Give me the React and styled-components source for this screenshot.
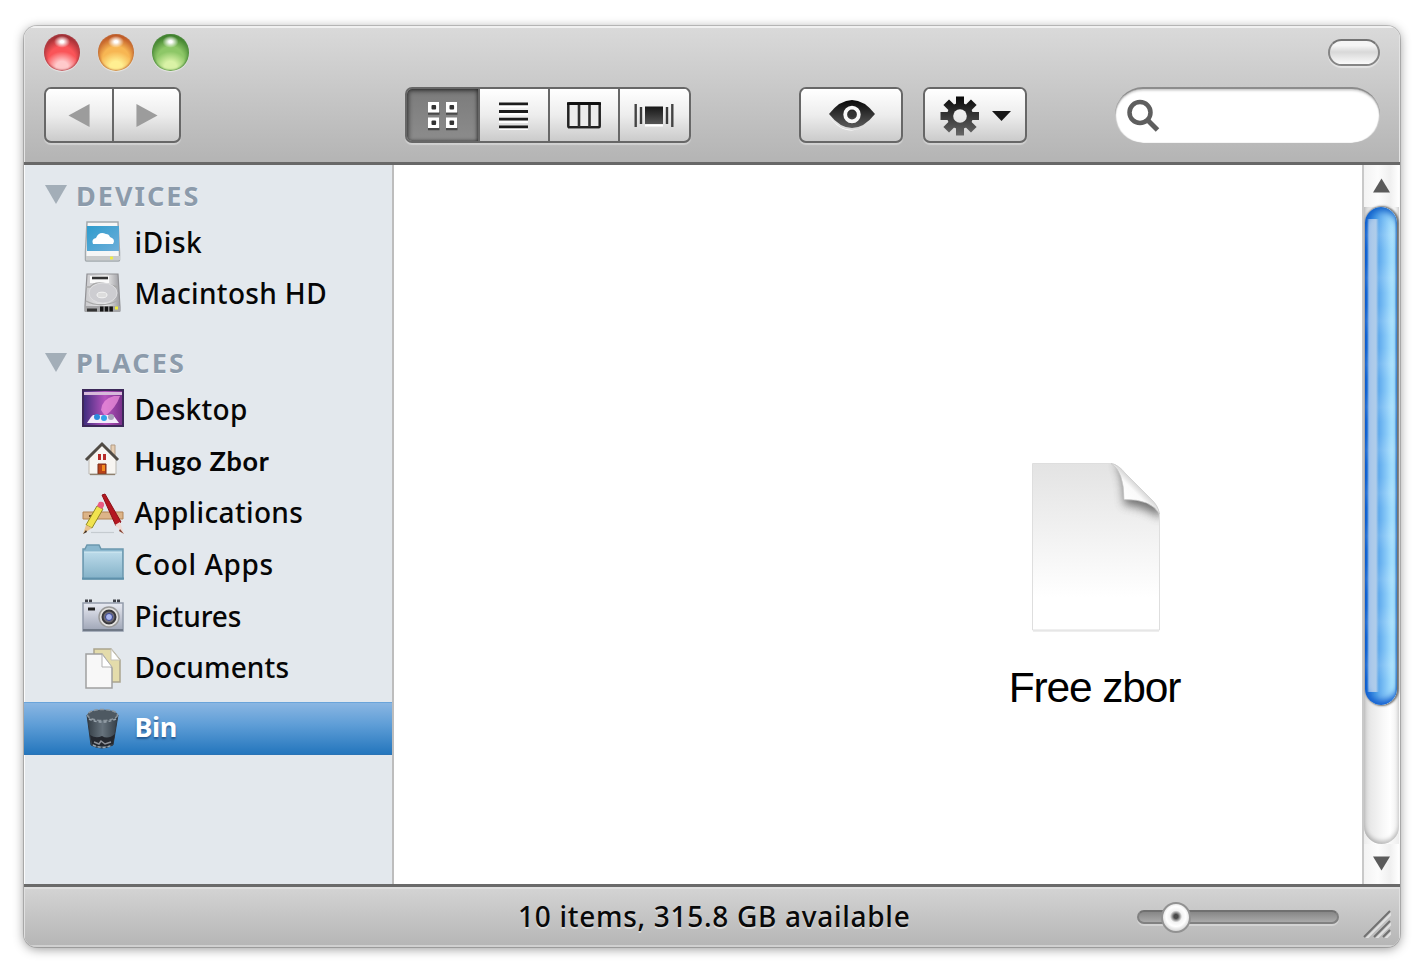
import React from 'react';
import styled, { createGlobalStyle, css } from 'styled-components';

const GlobalStyle = createGlobalStyle`
  * { box-sizing: border-box; }
  body { margin: 0; background: #fff; overflow: hidden; }
`;

const uiFont = css`font-family: "Noto Sans", "Open Sans", sans-serif;`;

const Page = styled.div`
  width: 1427px;
  height: 972px;
  padding: 26px 27px 25px 24px;
`;

const Window = styled.main`
  display: flex;
  flex-direction: column;
  height: 921px;
  border-radius: 13px;
  overflow: hidden;
  background: #fff;
  box-shadow: 0 0 0 1px rgba(0, 0, 0, 0.18), 0 2px 11px rgba(0, 0, 0, 0.42);
`;

const Header = styled.header`
  flex: none;
  height: 139px;
  padding: 8px 20px 0;
  background: linear-gradient(#dadada, #b4b4b4);
  border-bottom: 3px solid #686868;
  box-shadow: inset 0 2px 0 #f1f1f1, inset 1px 0 0 #e4e4e4, inset -1px 0 0 #e4e4e4;
`;

const TitleRow = styled.div`
  display: flex;
  align-items: center;
  justify-content: space-between;
  height: 37px;
`;

const Lights = styled.div`
  display: flex;
  gap: 18px;
`;

const Light = styled.span`
  width: 36.2px;
  height: 36.5px;
  border-radius: 50%;
  background:
    radial-gradient(ellipse 8px 6px at 50% 21%, #fff 0 20%, rgba(255, 255, 255, 0) 100%),
    radial-gradient(ellipse 17px 15px at 50% 88%, ${(p) => p.$glow} 0 35%, transparent 100%),
    radial-gradient(circle 27px at 50% 70%, ${(p) => p.$mid} 50%, ${(p) => p.$dark} 100%);
  box-shadow: inset 0 0 2px 1px ${(p) => p.$rim}, 0 1px 1px rgba(255, 255, 255, 0.5);
`;

const Pill = styled.span`
  width: 52px;
  height: 27px;
  border: 2.5px solid #858585;
  border-top-color: #747474;
  border-radius: 14px;
  background: linear-gradient(#f5f5f5 0 20%, #d8d8d8 48%, #fafafa);
  box-shadow: 0 2px 1px rgba(255, 255, 255, 0.45);
`;

const ToolRow = styled.div`
  display: flex;
  height: 56px;
  margin-top: 16px;
`;

const ButtonGroup = styled.div`
  display: flex;
  width: ${(p) => p.$width}px;
  height: 56px;
  margin-right: ${(p) => p.$after}px;
  overflow: hidden;
  border: 2px solid #676767;
  border-radius: 7px;
  background: linear-gradient(#fff, #ededed 50%, #cbcbcb);
  box-shadow: 0 2px 1px rgba(255, 255, 255, 0.35);
`;

const Tool = styled.button`
  display: flex;
  flex: ${(p) => (p.$width ? `0 0 ${p.$width}px` : '1')};
  align-items: center;
  justify-content: center;
  padding: 1px 0 0;
  border: 0;
  background: transparent;
  box-shadow: inset 0 1px 0 #fff;
  & + & { border-left: 2px solid #676767; }
  ${(p) => p.$active && css`
    background: linear-gradient(#7b7b7b, #8c8c8c);
    box-shadow: inset 0 2px 5px rgba(0, 0, 0, 0.45), inset 2px 0 4px rgba(0, 0, 0, 0.3), inset -1px 0 3px rgba(0, 0, 0, 0.3);
  `}
`;

const Search = styled.div`
  display: flex;
  align-items: center;
  width: 265px;
  height: 56px;
  padding-left: 11px;
  border-radius: 28px;
  border-top: 2px solid #8c8c8c;
  background: #fff;
  box-shadow: inset 0 2px 2px rgba(0, 0, 0, 0.15), inset 1px 0 1px rgba(0, 0, 0, 0.2), inset -1px 0 1px rgba(0, 0, 0, 0.2);
`;

const Body = styled.div`
  display: flex;
  flex: none;
  height: 719px;
`;

const Sidebar = styled.nav`
  ${uiFont}
  width: 370px;
  padding-top: 9px;
  border-right: 2px solid #bdbdbd;
  background: #e3e8ed;
  box-shadow: inset 1px 0 0 #fafbfc;
`;

const Heading = styled.h2`
  display: flex;
  align-items: center;
  gap: 9px;
  height: 42.4px;
  margin: ${(p) => p.$top || 0}px 0 0;
  padding-left: 21px;
  color: #8c9bab;
  font-size: 27px;
  font-weight: 700;
  line-height: 1;
  text-shadow: 0 1px 0 #f4f6f8;
`;

const Section = styled.span`
  letter-spacing: ${(p) => p.$track}px;
`;

const Item = styled.div`
  display: flex;
  align-items: center;
  gap: 10.5px;
  height: 51.6px;
  padding-left: 58px;
  color: #060606;
  svg { flex: none; overflow: visible; }
  ${(p) => p.$selected && css`
    height: 53px;
    margin-top: 8px;
    color: #fff;
    background: linear-gradient(#8ab6e2, #5f9ed7 42%, #2476bd);
    border-top: 1px solid #6aa4da;
    border-bottom: 1px solid #2a73b5;
    text-shadow: 0 2px 2px rgba(0, 40, 90, 0.5);
  `}
`;

const Label = styled.span`
  padding-bottom: ${(p) => p.$lift || 1}px;
  font-size: ${(p) => p.$size || 28}px;
  font-weight: ${(p) => p.$weight || 500};
  letter-spacing: ${(p) => p.$track || 0}px;
  line-height: 1;
  white-space: nowrap;
  ${(p) => p.$face && css`font-family: ${p.$face}, sans-serif;`}
`;

const Content = styled.section`
  display: flex;
  flex: 1;
  justify-content: flex-end;
  padding: 298px 176px 0 0;
`;

const File = styled.figure`
  display: flex;
  flex-direction: column;
  align-items: center;
  width: 180px;
  height: 260px;
  margin: 0;
  svg { overflow: visible; }
`;

const FileName = styled.figcaption`
  margin: 33px 3px 0 0;
  color: #000;
  font: 42.5px/48px "Liberation Sans", Arial, sans-serif;
  letter-spacing: -1.15px;
  white-space: nowrap;
`;

const Scrollbar = styled.div`
  display: flex;
  flex-direction: column;
  width: 38px;
  border-left: 2px solid #c9c9c9;
  border-right: 1px solid #fafafa;
  background: linear-gradient(90deg, #ececec, #fff 35%, #fff 60%, #eee);
`;

const ScrollArrow = styled.div`
  display: flex;
  align-items: center;
  justify-content: center;
  height: ${(p) => p.$height}px;
  padding-right: 1px;
  background: linear-gradient(90deg, #f3f3f3, #fcfcfc 40%, #f0f0f0 75%, #fff);
`;

const Track = styled.div`
  height: 637px;
  border-radius: 0 0 18px 18px;
  background: linear-gradient(90deg, #d9d9d9, #e9e9e9 20%, #f8f8f8 55%, #fff 75%, #eee);
  box-shadow: inset 0 -3px 4px rgba(0, 0, 0, 0.25);
`;

const Thumb = styled.div`
  width: 32px;
  height: 498px;
  margin-left: 1px;
  border-radius: 17px;
  background:
    linear-gradient(90deg, transparent 2px, #a9c8ea 4px, #b0cdea 11px, transparent 14px) 0 12px / 100% 473px no-repeat,
    repeating-linear-gradient(rgba(255, 255, 255, 0) 0 12px, rgba(255, 255, 255, 0.12) 28px, rgba(255, 255, 255, 0) 43px),
    linear-gradient(90deg, #0758cf, #1d70d8 9%, #4a9de6 35%, #67b0ef 48%, #8dcdf9 70%, #b4ecff 92%, #5295ca);
  box-shadow: inset 0 6px 7px -2px #1260c8, inset 0 -7px 6px -2px #1662d0, 1px 0 2px 1px rgba(60, 60, 60, 0.7);
`;

const StatusBar = styled.footer`
  ${uiFont}
  display: grid;
  grid-template-columns: 494px 1fr 202px 61px;
  align-items: center;
  flex: none;
  height: 63px;
  border-top: 3px solid #6a6a6a;
  background: linear-gradient(#d4d4d4, #b5b5b5);
  box-shadow: inset 0 2px 0 #dedede, inset 0 -2px 0 #d0d0d0, inset -1px 0 0 #e0e0e0, inset 1px 0 0 #e0e0e0;
`;

const Status = styled.p`
  grid-column: 2;
  margin: 0;
  padding-bottom: 2px;
  color: #090909;
  font-size: 28px;
  font-weight: 500;
  line-height: 1;
  letter-spacing: 0.71px;
  white-space: nowrap;
  text-shadow: 0 2px 0 rgba(255, 255, 255, 0.45);
`;

const Slider = styled.div`
  display: flex;
  align-items: center;
  width: 202px;
  height: 14px;
  padding-left: 24px;
  border: 2px solid #818181;
  border-top-color: #707070;
  border-radius: 7px;
  background: linear-gradient(#878787, #aaa);
  box-shadow: 0 2px 0 rgba(255, 255, 255, 0.3);
`;

const Knob = styled.span`
  flex: none;
  width: 30px;
  height: 31px;
  margin-left: -2px;
  border: 2px solid #929292;
  border-radius: 50%;
  background: radial-gradient(circle at 50% 46%, #4a4a4a 0 2px, #9e9e9e 4px, #f2f2f2 6px, #fff 10px, #dcdcdc 14px);
`;

const Grip = styled.svg`
  justify-self: end;
  margin: 13px 9px 0 0;
`;

const Chevron = ({ left }) => (
  <svg width="22" height="23" viewBox="0 0 22 24">
    <path d={left ? 'M0 12 22 0V24Z' : 'M22 12 0 0V24Z'} fill="#9c9c9c" />
  </svg>
);

const Disclosure = () => (
  <svg width="22" height="20" viewBox="0 0 22 20"><path d="M0 0H22L11 19Z" fill="#a3aeb8" /></svg>
);

const GridIcon = () => (
  <svg width="30" height="30" viewBox="0 0 30 30">
    {[[0, 1], [18, 1], [0, 16.5], [18, 16.5]].map(([x, y]) => (
      <g key={`${x}-${y}`}>
        <path d={`M${x} ${y + 11.5}h11.5`} stroke="#484848" strokeWidth="2.5" />
        <rect x={x} y={y} width="11" height="10.5" fill="#fff" />
        <rect x={x + 3.5} y={y + 3} width="4.6" height="4.6" rx="1" fill="#333" />
      </g>
    ))}
  </svg>
);

const ListIcon = () => (
  <svg width="30" height="28" viewBox="0 0 30 28">
    <path d="M0 4.3h29M0 12h29M0 19.7h29M0 27.4h29" stroke="#fff" strokeWidth="2.5" />
    <path d="M0 1.8h29M0 9.5h29M0 17.2h29M0 24.9h29" stroke="#1c1c1c" strokeWidth="2.8" />
  </svg>
);

const ColumnsIcon = () => (
  <svg width="34" height="27" viewBox="0 0 34 27">
    <path d="M2 27.500h30" stroke="#fff" strokeWidth="2" />
    <rect x="1.3" y="1.3" width="31.4" height="24" rx="1" fill="#ececec" stroke="#222" strokeWidth="2.5" />
    <path d="M12 2v23M22.500 2v23" stroke="#303030" strokeWidth="2.6" />
    <path d="M0 1.700h34" stroke="#111" strokeWidth="2.8" />
  </svg>
);

const FlowIcon = () => (
  <svg width="40" height="26" viewBox="0 0 40 26">
    <defs><linearGradient id="cover" x2="0" y2="1"><stop stopColor="#161616" /><stop offset="1" stopColor="#555" /></linearGradient></defs>
    <path d="M1.700 1v23M38.300 1v23" stroke="#444" strokeWidth="2.4" />
    <path d="M7 4v17M33 4v17" stroke="#3b3b3b" strokeWidth="2.4" />
    <path d="M11 22.500h18" stroke="#fff" strokeWidth="2" />
    <rect x="11" y="3.5" width="18" height="17.5" fill="url(#cover)" />
  </svg>
);

const EyeIcon = () => (
  <svg width="48" height="32" viewBox="-1 0 48 32">
    <defs><linearGradient id="eye" x2="0" y2="1"><stop stopColor="#080808" /><stop offset="1" stopColor="#5d5d5d" /></linearGradient></defs>
    <path d="M1 16Q11 30 24 30T47 16Q37 30 24 30.500T1 16Z" fill="#fff" />
    <path d="M1 14Q12 0 24 0T47 14Q36 28 24 28T1 14Z" fill="url(#eye)" />
    <circle cx="24" cy="14.5" r="6.8" fill="none" stroke="#f8f8f8" strokeWidth="3.8" />
    <circle cx="24" cy="14" r="3" fill="#333" />
  </svg>
);

const GearIcon = () => (
  <svg width="40" height="40" viewBox="-1 0 40 40">
    <defs><linearGradient id="gear" gradientUnits="userSpaceOnUse" x1="0" y1="0" x2="0" y2="40"><stop stopColor="#070707" /><stop offset="1" stopColor="#686868" /></linearGradient></defs>
    <mask id="teeth">
      <circle cx="20" cy="20" r="13" fill="#fff" />
      {[0, 45, 90, 135].map((a) => <rect key={a} x="16" y="0.5" width="8" height="39" fill="#fff" transform={`rotate(${a} 20 20)`} />)}
      <circle cx="20" cy="20" r="6.8" fill="#000" />
    </mask>
    <rect width="40" height="40" fill="url(#gear)" mask="url(#teeth)" />
  </svg>
);

const IDiskIcon = () => (
  <svg width="42" height="42" viewBox="0 0 42 42">
    <defs><linearGradient id="sky" x2="1" y2="1"><stop stopColor="#2e9ccd" /><stop offset="1" stopColor="#6eaed9" /></linearGradient></defs>
    <path d="M5 1h31l1.500 30v8q0 1-1 1h-32q-1 0-1-1v-8Z" fill="#f6f6f6" stroke="#a3a9ad" strokeWidth="1.5" />
    <path d="M5 5h32v25H5Z" fill="url(#sky)" />
    <path d="M11 23q-2-5 3-6 3-7 10-4 3 0 4 3 6 2 3 7Z" fill="#fff" />
    <path d="M4 35h34v4H4Z" fill="#c9cbcc" /><path d="M28 37h3" stroke="#efed42" strokeWidth="2.8" />
  </svg>
);

const DriveIcon = () => (
  <svg width="42" height="42" viewBox="0 0 42 42">
    <defs><linearGradient id="metal" x2="1" y2="0"><stop stopColor="#c9c9cc" /><stop offset=".6" stopColor="#eee" /><stop offset="1" stopColor="#9b9ba0" /></linearGradient></defs>
    <path d="M5 1h31l2 33v4H3v-5Z" fill="url(#metal)" stroke="#909094" strokeWidth="1.2" />
    <path d="M8 3h19v7H8Z" fill="#fafafa" /><path d="M10 5h16" stroke="#333" strokeWidth="2.6" />
    <path d="M4 14h4q5-6 16-3l12 3M4 28q15 8 33-1" fill="none" stroke="#aaa" strokeWidth="1.3" />
    <ellipse cx="21" cy="20" rx="14" ry="10" fill="#cdcdd1" stroke="#dedee0" />
    <ellipse cx="20" cy="22" rx="5" ry="2.800" fill="#ddd" stroke="#f4f4f4" />
    <path d="M3 33h35v6H3Z" fill="#a5a5a7" /><path d="M5 37h10" stroke="#333" strokeWidth="3" /><path d="M18 36h14" stroke="#151515" strokeWidth="5" strokeDasharray="3.500 1.200" /><path d="M33 35h3" stroke="#efed42" strokeWidth="3" />
  </svg>
);

const DesktopIcon = () => (
  <svg width="42" height="42" viewBox="0 0 42 42">
    <defs><linearGradient id="aurora" x2="1"><stop stopColor="#3c2c7c" /><stop offset=".55" stopColor="#b552bd" /><stop offset="1" stopColor="#762f88" /></linearGradient></defs>
    <rect x="1" y="1" width="40" height="36" fill="url(#aurora)" stroke="#3c2859" strokeWidth="2" />
    <path d="M19 21Q20 10 32 7h6Q34 19 23 27Z" fill="#ee8fdb" opacity=".75" />
    <path d="M2 4.500h38" stroke="#d6bada" strokeWidth="3" />
    <path d="m9 28 2-2h20l6 8H5Z" fill="#f3ecfa" />
    <circle cx="15" cy="28" r="3" fill="#2c8bdc" /><circle cx="22" cy="29" r="3" fill="#33a2ea" /><circle cx="29" cy="28" r="3" fill="#aaa3bb" />
  </svg>
);

const HomeIcon = () => (
  <svg width="42" height="42" viewBox="0 0 42 42">
    <path d="M29 5h4v11h-4Z" fill="#e7ceb2" stroke="#b29b84" /><path d="M7 18 20 5 34 18V34H7Z" fill="#f7f5f1" stroke="#bbb7b0" />
    <path d="M4 20 20 4 36 20" fill="none" stroke="#504b45" strokeWidth="3" />
    <path d="M16 14h3v6h-3ZM21 14h3v6h-3Z" fill="#b72c28" />
    <path d="M16 24h8v10h-8Z" fill="#b84319" stroke="#7a2d18" /><path d="M20 25h3v6h-3Z" fill="#f38b20" />
    <path d="M8 34.500h25" stroke="#8f806e" strokeWidth="1.3" />
  </svg>
);

const AppsIcon = () => (
  <svg width="42" height="42" viewBox="0 0 42 42">
    <path d="M1 20h40v7H1Z" fill="#dcb488" stroke="#b28355" /><path d="M7 24h2M32 24h2" stroke="#604027" strokeWidth="2" />
    <path d="m20 3 3-1 16 28-5 4Z" fill="#b41720" stroke="#8c1018" /><path d="m33 33 5-3 4 12Z" fill="#eedbd6" /><path d="m38 37 4 5-5-3" fill="#86402f" />
    <path d="m15 14 6 3L10 36l-6-3Z" fill="#f1e34e" stroke="#908823" /><path d="m15 14 2-4q6-1 5 4l-2 3Z" fill="#ea5b82" />
    <path d="m4 33 6 3-9 6Z" fill="#e8c28e" /><path d="m4 38-3 4 4-2" fill="#392920" /><path d="M9 40.500h23" stroke="#c5cbd0" strokeWidth="1.2" />
  </svg>
);

const FolderIcon = () => (
  <svg width="42" height="42" viewBox="0 0 42 42">
    <defs><linearGradient id="folder" x2="0" y2="1"><stop stopColor="#bcdbea" /><stop offset="1" stopColor="#87b4ca" /></linearGradient></defs>
    <path d="M1 35V5h2l2-4h12l2 4h22v30Z" fill="#8ab7ce" stroke="#6c98ae" strokeWidth="1.5" />
    <path d="M2 8h38v25H2Z" fill="url(#folder)" /><path d="M2 8h38" stroke="#d6ebf4" /><path d="M0 34.500h42" stroke="#5f91ab" strokeWidth="2" />
  </svg>
);

const CameraIcon = () => (
  <svg width="42" height="42" viewBox="0 0 42 42">
    <defs><linearGradient id="camera" x2="0" y2="1"><stop stopColor="#e9ebf3" /><stop offset="1" stopColor="#9da4b5" /></linearGradient></defs>
    <path d="M3 6h8M31 6h8" stroke="#3e4048" strokeWidth="3" strokeDasharray="3 1" />
    <rect x="1" y="8" width="40" height="28" fill="url(#camera)" stroke="#929baa" strokeWidth="1.5" />
    <path d="M6 14h7" stroke="#222" strokeWidth="3" /><circle cx="27" cy="22" r="10" fill="#e2e1df" stroke="#999" strokeWidth="1.500" />
    <circle cx="27" cy="22" r="6.5" fill="#6f6d75" stroke="#39383c" strokeWidth="2" /><circle cx="27" cy="22" r="3.500" fill="#a9b5ed" stroke="#394593" />
    <path d="M1 35h40" stroke="#707987" strokeWidth="2" />
  </svg>
);

const DocumentsIcon = () => (
  <svg width="42" height="42" viewBox="0 0 42 42">
    <path d="M12 2h17l9 11v22H12Z" fill="#e4dcab" stroke="#aaa48e" strokeWidth="1.5" /><path d="M29 2v11h9Z" fill="#fff" stroke="#c6c3b8" />
    <path d="M4 7h16l10 14v20H4Z" fill="#f8f8f8" stroke="#a0a0a0" strokeWidth="1.5" /><path d="M20 7v13h10Z" fill="#fff" stroke="#b1b1b1" />
  </svg>
);

const BinIcon = () => (
  <svg width="42" height="42" viewBox="0 0 42 42">
    <defs><linearGradient id="bin"><stop stopColor="#343d45" /><stop offset=".5" stopColor="#66727c" /><stop offset="1" stopColor="#333d46" /></linearGradient></defs>
    <path d="M5 8 9 38q11 6 22 0l5-30Z" fill="url(#bin)" stroke="#303841" />
    <path d="M8 28q6 4 12 1 6 4 13-2l-2 10q-11 5-21 0Z" fill="#24272e" />
    <path d="m12 35 5 2 2-3 4 3 6-2" fill="none" stroke="#8f9299" strokeWidth="1.500" />
    <ellipse cx="20.5" cy="8" rx="15" ry="5.500" fill="#4e5962" stroke="#8b959d" strokeWidth="1.500" strokeDasharray="4 2" />
    <path d="M7 12q13 6 27 0M11 38q10 5 19 0" fill="none" stroke="#9aa5ae" strokeWidth="1.500" strokeDasharray="3 2" />
  </svg>
);

const FileIcon = () => (
  <svg width="128" height="168" viewBox="0 0 128 168">
    <defs>
      <linearGradient id="paper" x2="0" y2="1"><stop stopColor="#e3e3e3" /><stop offset=".35" stopColor="#efefef" /><stop offset=".8" stopColor="#fff" /></linearGradient>
      <linearGradient id="fold" gradientUnits="userSpaceOnUse" x1="90" y1="36" x2="108" y2="18"><stop stopColor="#fff" /><stop offset=".55" stopColor="#fafafa" /><stop offset="1" stopColor="#bcbcbc" /></linearGradient>
      <clipPath id="sheet"><path d="M.5.5H78C86 .5 88 7 94 12L119 37Q127 44 127.500 52V167H.5Z" /></clipPath>
      <filter id="soft" x="-50%" y="-50%" width="200%" height="200%"><feGaussianBlur stdDeviation="5" /></filter>
    </defs>
    <path d="M1 168h126" stroke="#dedede" strokeWidth="1" />
    <g clipPath="url(#sheet)">
      <path d="M0 0h128v168H0Z" fill="url(#paper)" />
      <path d="M84 0Q92 13 92 42Q107 42 130 55V36L94 0Z" fill="#555" opacity=".8" filter="url(#soft)" />
    </g>
    <path d="M.5.5H78C86 .5 88 7 94 12L119 37Q127 44 127.500 52V167H.5Z" fill="none" stroke="#dedede" />
    <path d="M79 .5Q92 8 92 36.500Q119 36 127.500 51Q126 42 119 36L93 10Q87 2 79 .5Z" fill="url(#fold)" stroke="#c9c9c9" strokeWidth=".7" />
  </svg>
);

const places = [
  { name: 'Desktop', icon: <DesktopIcon />, track: 0.3 },
  { name: 'Hugo Zbor', icon: <HomeIcon />, track: 0.65, face: 'Lato', size: 27, weight: 700 },
  { name: 'Applications', icon: <AppsIcon />, track: 0.35 },
  { name: 'Cool Apps', icon: <FolderIcon />, track: 0.65 },
  { name: 'Pictures', icon: <CameraIcon />, track: -0.1 },
  { name: 'Documents', icon: <DocumentsIcon />, track: 0.15 },
];

export default function App() {
  return (
    <Page>
      <GlobalStyle />
      <Window>
        <Header>
          <TitleRow>
            <Lights>
              <Light $glow="#ffc9cb" $mid="#fa5458" $dark="#7e2025" $rim="#b34249" />
              <Light $glow="#ffef91" $mid="#f7b653" $dark="#ad3816" $rim="#c4743b" />
              <Light $glow="#d9f2a6" $mid="#8dc767" $dark="#256918" $rim="#528f42" />
            </Lights>
            <Pill />
          </TitleRow>
          <ToolRow>
            <ButtonGroup $width={137} $after={224}>
              <Tool $width={66} aria-label="Back"><Chevron left /></Tool>
              <Tool aria-label="Forward"><Chevron /></Tool>
            </ButtonGroup>
            <ButtonGroup $width={286} $after={108}>
              <Tool $width={71} $active aria-label="Icons"><GridIcon /></Tool>
              <Tool $width={70} aria-label="List"><ListIcon /></Tool>
              <Tool $width={70} aria-label="Columns"><ColumnsIcon /></Tool>
              <Tool $width={70} aria-label="Cover flow"><FlowIcon /></Tool>
            </ButtonGroup>
            <ButtonGroup $width={104} $after={20}>
              <Tool aria-label="Quick look"><EyeIcon /></Tool>
            </ButtonGroup>
            <ButtonGroup $width={104} $after={88}>
              <Tool aria-label="Actions">
                <GearIcon />
                <svg width="32" height="12" viewBox="0 0 32 12"><path d="M13 1h19L22.500 11Z" fill="#171717" /></svg>
              </Tool>
            </ButtonGroup>
            <Search>
              <svg width="34" height="34" viewBox="0 0 34 34">
                <circle cx="14" cy="13.5" r="10.500" fill="none" stroke="#5e5e5e" strokeWidth="4.500" />
                <path d="m21 20.500 10.500 10.500" stroke="#5e5e5e" strokeWidth="5" />
              </svg>
            </Search>
          </ToolRow>
        </Header>
        <Body>
          <Sidebar>
            <Heading><Disclosure /><Section $track={2}>DEVICES</Section></Heading>
            <Item><IDiskIcon /><Label $track={0.6}>iDisk</Label></Item>
            <Item><DriveIcon /><Label $track={0.35}>Macintosh HD</Label></Item>
            <Heading $top={22}><Disclosure /><Section $track={2.1}>PLACES</Section></Heading>
            {places.map((p) => (
              <Item key={p.name}>
                {p.icon}
                <Label $track={p.track} $face={p.face} $size={p.size} $weight={p.weight}>{p.name}</Label>
              </Item>
            ))}
            <Item $selected><BinIcon /><Label $weight={700} $size={27} $track={-0.4} $lift={4}>Bin</Label></Item>
          </Sidebar>
          <Content>
            <File><FileIcon /><FileName>Free zbor</FileName></File>
          </Content>
          <Scrollbar>
            <ScrollArrow $height={42}><svg width="17" height="16" viewBox="0 0 18 16"><path d="M9 0 18 15H0Z" fill="#5b5b5b" /></svg></ScrollArrow>
            <Track><Thumb /></Track>
            <ScrollArrow $height={40}><svg width="17" height="16" viewBox="0 0 18 16"><path d="M9 15 18 0H0Z" fill="#5b5b5b" /></svg></ScrollArrow>
          </Scrollbar>
        </Body>
        <StatusBar>
          <Status>10 items, 315.8 GB available</Status>
          <Slider><Knob /></Slider>
          <Grip width="28" height="28" viewBox="0 0 28 28">
            <path d="M1 28 28 1M11 28 28 11M20 28l8-8" stroke="#e0e0e0" strokeWidth="2" transform="translate(1 2)" />
            <path d="M1 27 27 1M11 27 27 11M20 27l7-7" stroke="#717171" strokeWidth="2" />
          </Grip>
        </StatusBar>
      </Window>
    </Page>
  );
}
